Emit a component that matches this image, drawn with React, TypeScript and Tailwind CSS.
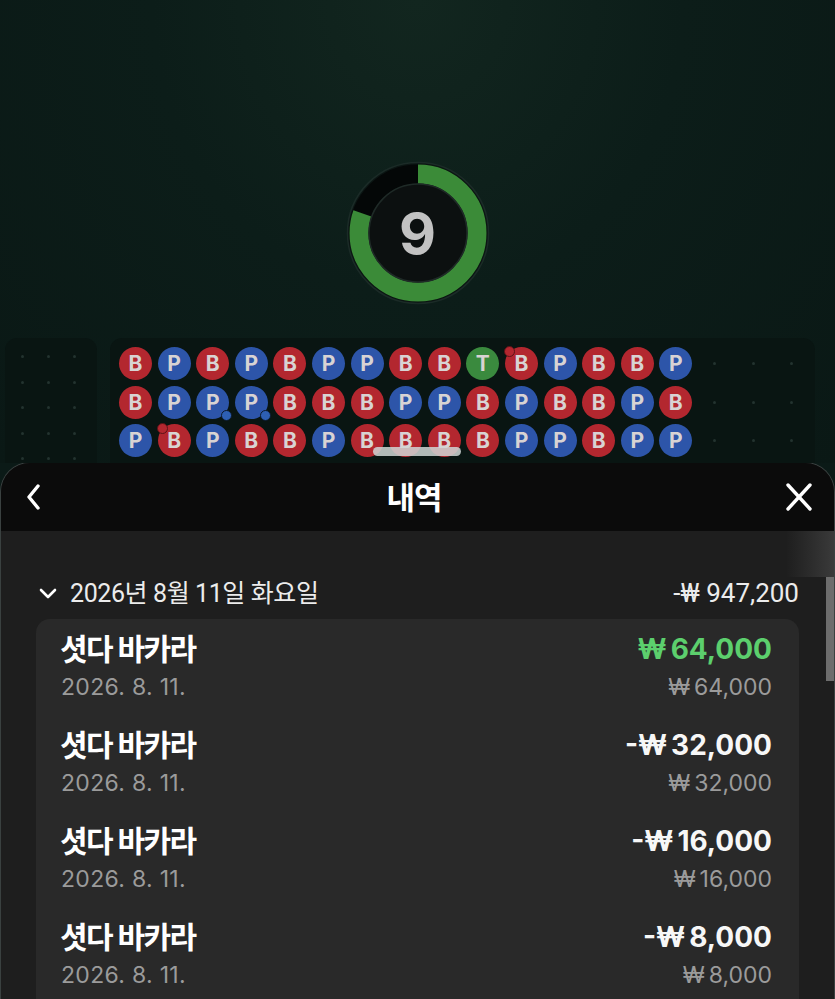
import React from "react";

const rows = ["BPBPBPPBBTBPBBP", "BPPPBBBPPBPBBPB", "PBPBBPBBBBPPBPP"];
const markers: Record<string, "redTL" | "blueBR"> = {
  "0-10": "redTL",
  "1-2": "blueBR",
  "1-3": "blueBR",
  "2-1": "redTL",
};

function Bead({ t, m }: { t: string; m?: "redTL" | "blueBR" }) {
  const bg = t === "B" ? "bg-[#b3272f]" : t === "P" ? "bg-[#2d55a9]" : "bg-[#3a8a3e]";
  return (
    <div className={`relative w-[33px] h-[33px] rounded-full ${bg} flex items-center justify-center`}>
      <span className="text-[21px] font-bold text-[#d8d3d3] leading-none" style={{ fontFamily: "Inter, sans-serif" }}>
        {t}
      </span>
      {m === "redTL" && (
        <span className="absolute left-[-1px] top-[-1px] w-[11px] h-[11px] rounded-full bg-[#b3272f] border border-[#5a1418]" />
      )}
      {m === "blueBR" && (
        <span className="absolute right-[-3px] bottom-[-2px] w-[11px] h-[11px] rounded-full bg-[#2d5fb3] border border-[#0c1a2a]" />
      )}
    </div>
  );
}

function Dot() {
  return (
    <div className="flex items-center justify-center">
      <span className="w-[3px] h-[3px] rounded-full bg-[#23332f]" />
    </div>
  );
}

function Timer() {
  const r = 59;
  const c = 2 * Math.PI * r;
  const dash = (289 / 360) * c;
  return (
    <div className="relative w-[144px] h-[144px] mx-auto">
      <svg width="144" height="144" viewBox="0 0 144 144" className="absolute inset-0">
        <circle cx="72" cy="72" r="70.5" fill="#0b1513" stroke="#1b2b27" strokeWidth="1.5" />
        <circle cx="72" cy="72" r={r} fill="none" stroke="#040707" strokeWidth="19" />
        <circle
          cx="72"
          cy="72"
          r={r}
          fill="none"
          stroke="#3b8b38"
          strokeWidth="19"
          strokeDasharray={`${dash} ${c}`}
          transform="rotate(-90 72 72)"
        />
        <circle cx="72" cy="72" r="49" fill="#0c1010" stroke="#1f2a27" strokeWidth="1.5" />
      </svg>
      <div className="absolute inset-0 flex items-center justify-center">
        <span className="text-[57px] font-bold text-[#c2c2c2] leading-none" style={{ fontFamily: "Inter, sans-serif" }}>
          9
        </span>
      </div>
    </div>
  );
}

const items = [
  { amt: "64,000", neg: false, green: true },
  { amt: "32,000", neg: true, green: false },
  { amt: "16,000", neg: true, green: false },
  { amt: "8,000", neg: true, green: false },
];

export default function App() {
  const font = { fontFamily: 'Inter, "Noto Sans CJK KR", sans-serif' };
  return (
    <div className="w-[835px] h-[999px] overflow-hidden bg-[#0b1a17] flex flex-col" style={font}>
      {/* Top game area */}
      <div className="relative h-[463px] shrink-0 overflow-hidden bg-[radial-gradient(ellipse_at_50%_0%,#12261f_0%,#0c1d19_45%,#0a1815_100%)]">
        <div className="pt-[161px]">
          <Timer />
        </div>
        <div className="mt-[33px] flex">
          <div className="ml-[5px] w-[92px] h-[140px] rounded-[12px] bg-[#091512] pl-[4px] pt-[6px] grid grid-cols-[repeat(3,26px)] auto-rows-[25.5px]">
            {Array.from({ length: 15 }).map((_, i) => (
              <Dot key={i} />
            ))}
          </div>
          <div className="ml-[13px] w-[705px] h-[140px] rounded-[12px] bg-[#091512] pl-[9px] pt-[9px] grid grid-cols-[repeat(18,33px)] auto-rows-[33px] gap-[5.6px]">
            {rows.map((row, r) =>
              Array.from({ length: 18 }).map((_, c) => {
                const t = row[c];
                if (!t) return <Dot key={`${r}-${c}`} />;
                return <Bead key={`${r}-${c}`} t={t} m={markers[`${r}-${c}`]} />;
              })
            )}
          </div>
        </div>
        <div className="absolute left-[373px] bottom-[7px] w-[88px] h-[9px] rounded-full bg-[#cfd6d5]/85" />
      </div>

      {/* Bottom sheet */}
      <div className="flex-1 min-h-0 -mt-px rounded-t-[30px] border-t border-x border-[#3a4140] overflow-hidden flex flex-col bg-[#1e1e1e]">
        <div className="h-[68px] shrink-0 bg-[#0b0b0b] flex items-center justify-between pl-[23px] pr-[20px]">
          <svg width="20" height="28" viewBox="0 0 20 28">
            <path d="M14 3 L5 14 L14 25" fill="none" stroke="#ffffff" strokeWidth="3.4" strokeLinecap="round" strokeLinejoin="round" />
          </svg>
          <span className="text-[31px] font-bold text-white leading-none tracking-[-1px]">내역</span>
          <svg width="30" height="28" viewBox="0 0 30 28">
            <path d="M4 2 L26 26 M26 2 L4 26" fill="none" stroke="#ffffff" strokeWidth="3.4" strokeLinecap="round" />
          </svg>
        </div>
        <div className="relative flex-1 min-h-0 overflow-hidden">
          <div className="absolute right-0 top-0 w-[48px] h-[46px] bg-gradient-to-r from-[#1e1e1e] to-[#3a3a3a]" />
          <div className="absolute right-0 top-[46px] w-[8px] h-[104px] bg-[#6d6d6d]" />
          <div className="pl-[35px] pr-[35px] pt-[47px]">
            <div className="h-[30px] flex items-center justify-between" style={{ fontFamily: 'Roboto, "Noto Sans CJK KR", sans-serif' }}>
              <div className="flex items-center">
                <svg width="20" height="14" viewBox="0 0 20 14" className="ml-[2px] mr-[12px]">
                  <path d="M3 4 L10 11 L17 4" fill="none" stroke="#ffffff" strokeWidth="2.6" strokeLinecap="round" strokeLinejoin="round" />
                </svg>
                <span className="text-[25px] text-[#ececec] tracking-[-0.4px] leading-none">2026년 8월 11일 화요일</span>
              </div>
              <span className="text-[26px] text-[#ececec] leading-none">-₩ 947,200</span>
            </div>
            <div className="mt-[11px] rounded-[14px] bg-[#292929] pl-[24px] pr-[27px] pt-[12px] pb-[60px] flex flex-col gap-[20px]">
              {items.map((it, i) => (
                <div key={i} className="flex justify-between">
                  <div className="flex flex-col">
                    <span className="h-[36px] leading-[36px] text-[30px] font-bold text-white tracking-[-1.6px]">셧다 바카라</span>
                    <span className="h-[40px] leading-[40px] text-[23px] text-[#9b9b9b] tracking-[0.3px] pl-[1px]">2026. 8. 11.</span>
                  </div>
                  <div className="flex flex-col items-end">
                    <span
                      className={`h-[36px] leading-[36px] text-[28px] font-bold ${it.green ? "text-[#5ccf6d]" : "text-[#f7f7f7]"}`}
                    >
                      {it.neg ? "-" : ""}
                      <span className="mr-[4px]">₩</span>
                      {it.amt}
                    </span>
                    <span className="h-[40px] leading-[40px] text-[23px] text-[#9b9b9b]">
                      <span className="mr-[4px]">₩</span>
                      {it.amt}
                    </span>
                  </div>
                </div>
              ))}
            </div>
          </div>
        </div>
      </div>
    </div>
  );
}
